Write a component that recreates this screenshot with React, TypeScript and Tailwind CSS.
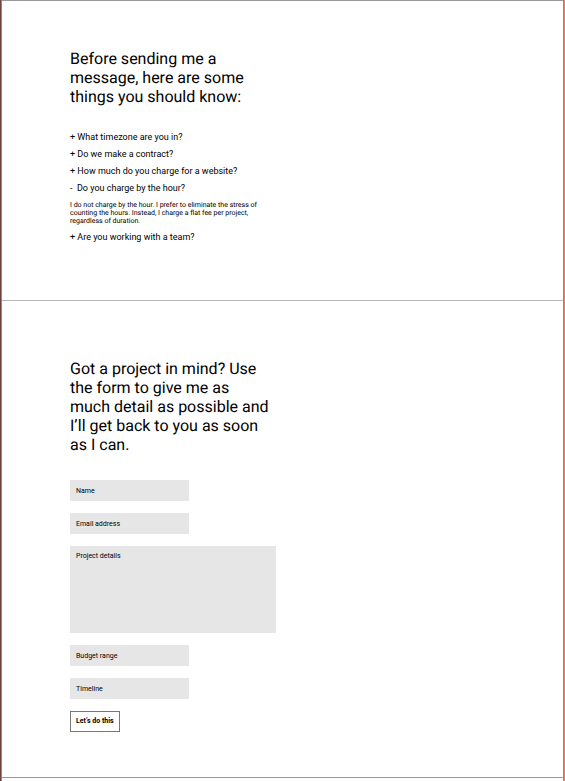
import { useState } from "react";

const questions = [
  { q: "What timezone are you in?", a: "" },
  { q: "Do we make a contract?", a: "" },
  { q: "How much do you charge for a website?", a: "" },
  {
    q: "Do you charge by the hour?",
    a: "I do not charge by the hour. I prefer to eliminate the stress of counting the hours. Instead, I charge a flat fee per project, regardless of duration.",
  },
  { q: "Are you working with a team?", a: "" },
];

const field =
  "block bg-[#e6e6e6] px-[6px] text-[7px] leading-[9px] text-black placeholder:text-black placeholder:opacity-100 rounded-none outline-offset-1";

function Faq() {
  const [open, setOpen] = useState(3);
  return (
    <section className="border-t border-[#999] px-[68px] pt-12 pb-[54px]">
      <h2 className="max-w-[202px] text-[16px] leading-[19px]">
        Before sending me a message, here are some things you should know:
      </h2>
      <ul className="mt-[23px]">
        {questions.map((item, i) => (
          <li key={item.q}>
            <button
              type="button"
              aria-expanded={open === i}
              onClick={() => setOpen(open === i ? -1 : i)}
              className="block text-left text-[9px] leading-[17px] whitespace-pre"
            >
              {(open === i ? "-  " : "+ ") + item.q}
            </button>
            {open === i && item.a && (
              <p className="max-w-[200px] pt-1 pb-1 text-[7px] leading-[8px]">{item.a}</p>
            )}
          </li>
        ))}
      </ul>
    </section>
  );
}

function Contact() {
  return (
    <section className="border-t border-[#b8b8b8] px-[68px] pt-[58px] pb-[45px]">
      <h2 className="max-w-[202px] text-[16px] leading-[19px]">
        Got a project in mind? Use the form to give me as much detail as possible and I’ll get back to you as soon as I can.
      </h2>
      <form className="mt-[26px] flex flex-col items-start gap-3" onSubmit={(e) => e.preventDefault()}>
        <input aria-label="Name" placeholder="Name" className={`${field} h-[21px] w-[119px]`} />
        <input aria-label="Email address" type="email" placeholder="Email address" className={`${field} h-[21px] w-[119px]`} />
        <textarea aria-label="Project details" placeholder="Project details" className={`${field} h-[87px] w-[206px] resize-none py-[6px]`} />
        <input aria-label="Budget range" placeholder="Budget range" className={`${field} h-[21px] w-[119px]`} />
        <input aria-label="Timeline" placeholder="Timeline" className={`${field} h-[21px] w-[119px]`} />
        <button type="submit" className="h-[21px] border border-[#777] px-[5px] text-[7px] leading-[9px] font-bold">
          Let’s do this
        </button>
      </form>
    </section>
  );
}

export default function App() {
  return (
    <div className="flex min-h-screen bg-white font-['Roboto',sans-serif] text-black [text-rendering:geometricPrecision]">
      <div className="w-[2px] shrink-0 border-r border-[#e9684a] bg-[#70443e]" />
      <main className="min-w-0 flex-1">
        <Faq />
        <Contact />
        <div className="h-[3px] border-t border-[#999]" />
      </main>
      <div className="w-[2px] shrink-0 border-l border-[#d66f5c] bg-[#ef7b62]" />
    </div>
  );
}
